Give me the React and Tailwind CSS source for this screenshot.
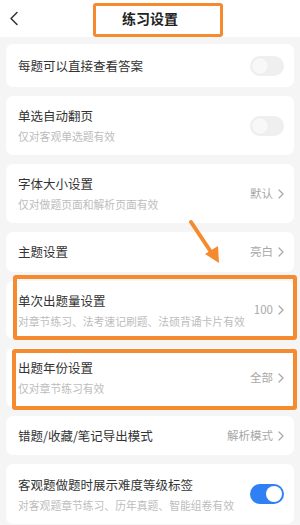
import { useState } from 'react';

const font = { fontFamily: '"Noto Sans CJK SC", "Noto Sans", sans-serif' };

function Toggle({ on }) {
  return (
    <div
      className={`flex h-[20px] w-[34px] shrink-0 items-center rounded-full px-[2px] ${
        on ? 'justify-end bg-[#2f80f4]' : 'justify-start bg-[#efefef]'
      }`}
    >
      <div className={`h-[16px] w-[16px] rounded-full ${on ? 'bg-white' : 'bg-[#f8f8f8] shadow-[0_0_1px_rgba(0,0,0,0.08)]'}`} />
    </div>
  );
}

function Value({ text }) {
  return (
    <div className="flex shrink-0 items-center gap-[5px] text-[11.5px] text-[#a8a8a8]">
      <span>{text}</span>
      <svg width="6" height="10" viewBox="0 0 6 10" fill="none">
        <path d="M1 1l4 4-4 4" stroke="#a8a8a8" strokeWidth="1.2" strokeLinecap="round" strokeLinejoin="round" />
      </svg>
    </div>
  );
}

function Row({ title, sub, right, h }) {
  return (
    <div className={`flex items-center justify-between rounded-[7px] bg-white pl-[12px] pr-[10px] ${h}`}>
      <div className="flex min-w-0 flex-col justify-center">
        <p className="whitespace-nowrap text-[12.5px] leading-[18px] text-[#333333]">{title}</p>
        {sub && <p className="mt-[3px] whitespace-nowrap text-[10.8px] leading-[16px] text-[#bdbdbd]">{sub}</p>}
      </div>
      {right}
    </div>
  );
}

export default function App() {
  const [rows] = useState([
    { title: '每题可以直接查看答案', right: <Toggle on={false} />, h: 'h-[43px]' },
    { title: '单选自动翻页', sub: '仅对客观单选题有效', right: <Toggle on={false} />, h: 'h-[59px]' },
    { title: '字体大小设置', sub: '仅对做题页面和解析页面有效', right: <Value text="默认" />, h: 'h-[59px]' },
    { title: '主题设置', right: <Value text="亮白" />, h: 'h-[40px]' },
    { title: '单次出题量设置', sub: '对章节练习、法考速记刷题、法硕背诵卡片有效', right: <Value text="100" />, h: 'h-[58px]' },
    { title: '出题年份设置', sub: '仅对章节练习有效', right: <Value text="全部" />, h: 'h-[59px]' },
    { title: '错题/收藏/笔记导出模式', right: <Value text="解析模式" />, h: 'h-[39px]' },
    { title: '客观题做题时展示难度等级标签', sub: '对客观题章节练习、历年真题、智能组卷有效', right: <Toggle on />, h: 'h-[60px]' },
  ]);

  return (
    <div className="relative h-[525px] w-[300px] overflow-hidden bg-[#f5f5f5]" style={font}>
      <header className="relative flex h-[37px] items-center justify-center bg-white">
        <svg className="absolute left-[9px] top-[11px]" width="10" height="15" viewBox="0 0 10 15" fill="none">
          <path d="M8 1.5L2 7.5l6 6" stroke="#333" strokeWidth="1.5" strokeLinecap="round" strokeLinejoin="round" />
        </svg>
        <h1 className="text-[14px] font-bold text-[#222222]">练习设置</h1>
      </header>

      <div className="flex flex-col gap-[9px] px-[6px] pt-[7px]">
        {rows.map((r) => (
          <Row key={r.title} {...r} />
        ))}
      </div>

      {/* annotation overlays */}
      <div className="pointer-events-none absolute left-[93px] top-[3px] h-[34px] w-[130px] rounded-[3px] border-[3px] border-[#f58a2e]" />
      <div className="pointer-events-none absolute left-[13px] top-[275px] h-[65px] w-[284px] rounded-[3px] border-[4px] border-[#f58a2e]" />
      <div className="pointer-events-none absolute left-[12px] top-[349px] h-[61px] w-[285px] rounded-[3px] border-[4px] border-[#f58a2e]" />
      <svg className="pointer-events-none absolute left-[184px] top-[218px]" width="40" height="50" viewBox="0 0 40 50" fill="none">
        <path d="M7 4L27 34" stroke="#f58a2e" strokeWidth="4" strokeLinecap="round" />
        <path d="M35 45L21 36l13-8z" fill="#f58a2e" />
      </svg>
    </div>
  );
}
